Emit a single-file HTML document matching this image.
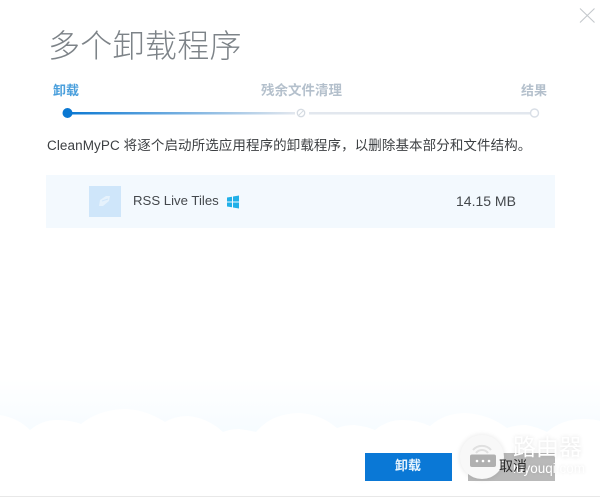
<!DOCTYPE html>
<html><head><meta charset="utf-8">
<style>
html,body{margin:0;padding:0;background:#fff}
#p{position:relative;width:600px;height:497px;overflow:hidden;background:#fff;font-family:"Liberation Sans","Noto Sans CJK SC",sans-serif}
.t{position:absolute;white-space:nowrap;line-height:1}
</style></head><body>
<div id="p">
<svg style="position:absolute;left:0;top:0" width="600" height="497" viewBox="0 0 600 497">
<defs>
<linearGradient id="sky" x1="0" y1="0" x2="0" y2="1"><stop offset="0" stop-color="#fff"/><stop offset="1" stop-color="#f5fbff"/></linearGradient>
<linearGradient id="ln" x1="0" y1="0" x2="1" y2="0"><stop offset="0" stop-color="#0a78d2"/><stop offset="1" stop-color="#e2e7ee"/></linearGradient>
</defs>
<rect x="0" y="380" width="600" height="60" fill="url(#sky)"/>
<path d="M0 415Q18 418 30 430Q42 420 57 420Q70 420 81 424Q100 409 126 409Q146 410 165 422Q175 416 188 416Q208 418 223 432Q230 429 239 429Q248 430 256 432Q272 413 300 413Q320 414 337 428Q345 425 354 425Q365 426 375 430Q387 420 402 420Q417 420 430 426Q445 413 465 413Q488 414 507 428Q516 425 526 425Q537 427 547 432Q562 419 584 419Q593 419 600 421V497H0Z" fill="#fff"/>
<rect x="0" y="496" width="600" height="1" fill="#e8e8e8"/>
<path d="M580 8.500L594.500 22.500M594.500 8.500L580 22.500" stroke="#c4c8cc" stroke-width="1.100" fill="none"/>
<rect x="68" y="112" width="227" height="2.500" fill="url(#ln)"/>
<rect x="309" y="112" width="221" height="2.500" fill="#e2e7ee"/>
<circle cx="67.500" cy="113" r="5" fill="#0a78d2"/>
<circle cx="301" cy="113" r="3.700" fill="none" stroke="#d5dbe2" stroke-width="1.300"/>
<path d="M299 115L303 111" stroke="#d5dbe2" stroke-width="1"/>
<circle cx="534.500" cy="113" r="4" fill="#fff" stroke="#d8dee6" stroke-width="1.400"/>
<rect x="46" y="175" width="509" height="53" fill="#f3f9fe"/>
<rect x="89" y="186" width="32" height="31" fill="#cfe6fa"/>
<path d="M100 200L106 196H110L109 201L103 206H99Z" fill="#e6f2fc"/>
<path d="M102 201L108 199" stroke="#cfe6fa" stroke-width="1"/>
<path d="M227 197.500L232 196.700V201.500H227ZM233 196.500L239 195.500V201.500H233ZM227 202.500H232V207.300L227 206.500ZM233 202.500H239V208.500L233 207.500Z" fill="#21b0e8"/>
<rect x="365" y="453" width="87" height="28" fill="#0a78d6"/>
<rect x="468" y="453" width="87" height="28" fill="#b9b9b9"/>
</svg>
<div class="t" style="left:48px;top:30px;font-size:32px;color:#7d8388;font-weight:300;letter-spacing:0.300px">多个卸载程序</div>
<div class="t" style="left:53px;top:84px;font-size:13px;font-weight:700;color:#4a9fdc">卸载</div>
<div class="t" style="left:261px;top:84px;font-size:13.500px;font-weight:700;color:#b4c0cc">残余文件清理</div>
<div class="t" style="left:521px;top:84px;font-size:13px;font-weight:700;color:#b4c0cc">结果</div>
<div class="t" style="left:47px;top:139px;font-size:13.500px;letter-spacing:.09px;color:#3c3f42">CleanMyPC 将逐个启动所选应用程序的卸载程序，以删除基本部分和文件结构。</div>
<div class="t" style="left:133px;top:194px;font-size:13.200px;color:#44484c">RSS Live Tiles</div>
<div class="t" style="left:456px;top:194px;font-size:14px;color:#44484c">14.15 MB</div>
<div class="t" style="left:395px;top:459px;font-size:13px;font-weight:700;color:#e8f4fd">卸载</div>
<svg style="position:absolute;left:440px;top:420px;width:160px;height:77px" width="160" height="77" viewBox="440 420 160 77">
<defs><filter id="b" x="-30%" y="-30%" width="160%" height="160%"><feGaussianBlur stdDeviation="2.500"/></filter></defs>
<circle cx="482" cy="457" r="23" fill="#000" opacity=".07" filter="url(#b)"/>
<circle cx="482" cy="457" r="22" fill="#f8f8f8"/>
<path d="M476 453A7.500 7.500 0 0 1 488 453M473 450A12 12 0 0 1 491 450" fill="none" stroke="#e0e0e0" stroke-width="2"/>
<rect x="470" y="454.500" width="26" height="12.500" rx="2" fill="#b0b0b0"/>
<circle cx="477" cy="461" r="1.300" fill="#fff"/><circle cx="483" cy="461" r="1.300" fill="#fff"/><circle cx="489" cy="461" r="1.300" fill="#fff"/>
</svg>
<div class="t" style="left:513px;top:436px;font-size:23px;color:#fff;text-shadow:0 0 4px rgba(0,0,0,.12)">路由器</div>
<div class="t" style="left:513px;top:462px;font-size:13.500px;color:#fff;text-shadow:0 0 3px rgba(0,0,0,.1)">luyouqi.com</div>
<div class="t" style="left:499px;top:459px;font-size:14px;color:#2a2a2a">取消</div>
</div>
</body></html>
